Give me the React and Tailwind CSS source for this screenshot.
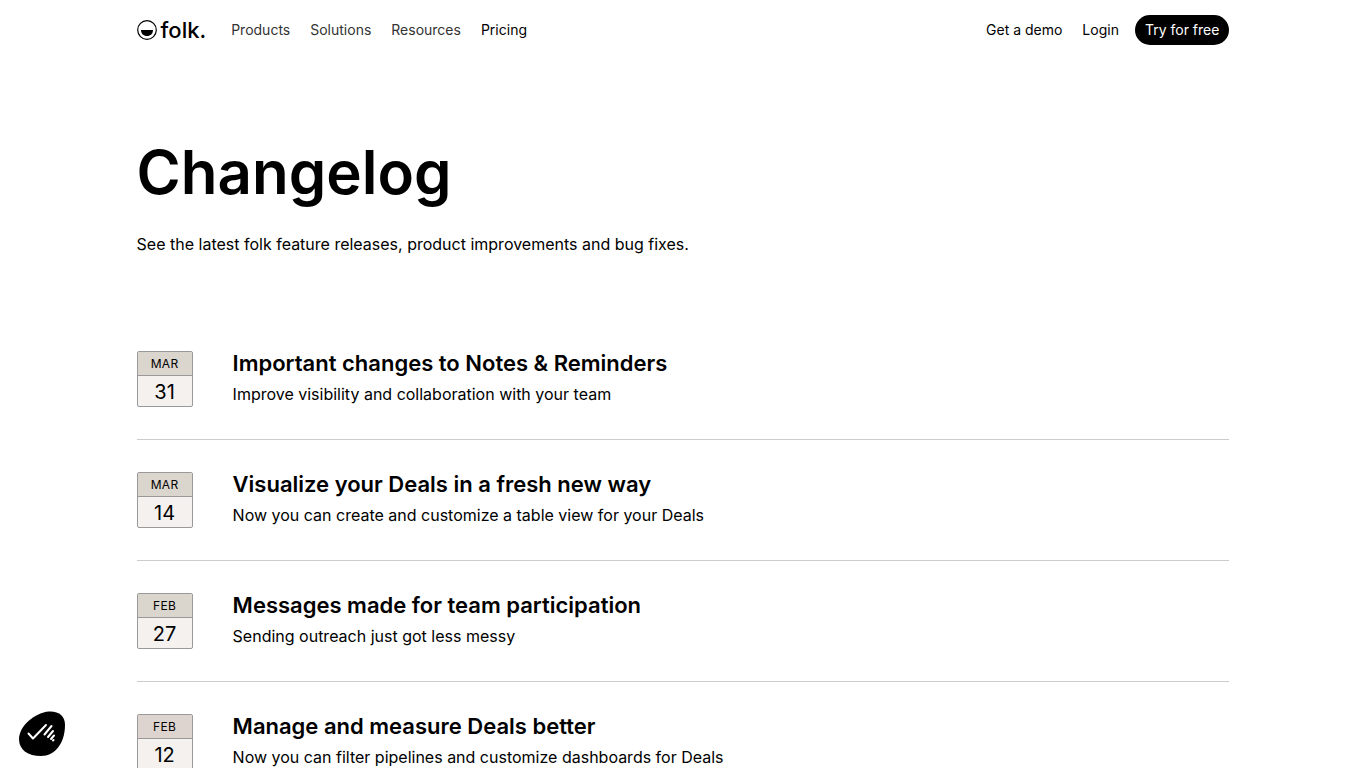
import React from 'react';

const navLinks = [
  { label: 'Products', muted: true },
  { label: 'Solutions', muted: true },
  { label: 'Resources', muted: true },
  { label: 'Pricing', muted: false },
];

const releases = [
  {
    month: 'MAR',
    day: '31',
    title: 'Important changes to Notes & Reminders',
    text: 'Improve visibility and collaboration with your team',
    tint: 'bg-[#dad5cd]',
  },
  {
    month: 'MAR',
    day: '14',
    title: 'Visualize your Deals in a fresh new way',
    text: 'Now you can create and customize a table view for your Deals',
    tint: 'bg-[#dad5cd]',
  },
  {
    month: 'FEB',
    day: '27',
    title: 'Messages made for team participation',
    text: 'Sending outreach just got less messy',
    tint: 'bg-[#dad5cd]',
  },
  {
    month: 'FEB',
    day: '12',
    title: 'Manage and measure Deals better',
    text: 'Now you can filter pipelines and customize dashboards for Deals',
    tint: 'bg-[#ddd4cf]',
  },
];

const Logo = () => (
  <a href="#" className="flex items-center gap-1">
    <svg className="h-5 w-5" viewBox="0 0 20 20" fill="none">
      <circle cx="10" cy="10" r="9.3" stroke="#000" strokeWidth="1.2" />
      <path d="M4 10h12c0 3.8-2.5 6-6 6s-6-2.200-6-6z" fill="#000" />
    </svg>
    <span className="text-[22px] leading-6 font-medium">folk.</span>
  </a>
);

const Header = () => (
  <header className="mx-auto flex h-15 w-4/5 items-center justify-between text-sm">
    <div className="flex items-center gap-[25px]">
      <Logo />
      <nav className="flex items-center gap-5">
        {navLinks.map((link) => (
          <a key={link.label} href="#" className={link.muted ? 'text-[#333]' : 'text-black'}>
            {link.label}
          </a>
        ))}
      </nav>
    </div>
    <div className="flex items-center">
      <a href="#" className="mr-5">Get a demo</a>
      <a href="#" className="mr-4">Login</a>
      <a href="#" className="rounded-full bg-black px-2.5 py-1 leading-[22px] text-white">
        Try for free
      </a>
    </div>
  </header>
);

const DateTile = ({ month, day, tint }) => (
  <div className="h-14 w-14 shrink-0 overflow-hidden rounded-xs border border-[#999] bg-[#f4f1ee] text-center">
    <div className={`h-6 border-b border-[#999] text-xs leading-6 tracking-wide ${tint}`}>{month}</div>
    <div className="text-xl leading-8">{day}</div>
  </div>
);

const Release = ({ month, day, title, text, tint }) => (
  <li className="border-b border-[#ccc]">
    <a href="#" className="flex gap-10 py-8">
      <DateTile month={month} day={day} tint={tint} />
      <div className="flex flex-col gap-[7px]">
        <h2 className="text-[22px] leading-6 font-semibold">{title}</h2>
        <p className="leading-6">{text}</p>
      </div>
    </a>
  </li>
);

// Cookie consent trigger pinned to the bottom left corner
const ConsentButton = () => (
  <button type="button" aria-label="Cookie preferences" className="fixed bottom-2.5 left-4.5 h-12 w-12">
    <svg viewBox="0 0 48 48" fill="none">
      <path d="M31 1.500C41 1 47 6 47 15C47 33 37 46 23 46C10 46 1 40 1 29C1 16 17 2.500 31 1.500Z" fill="#000" />
      <g stroke="#fff" strokeWidth="2" strokeLinecap="round">
        <path d="M10.500 23.500l4.500 5L28 15" strokeLinejoin="round" />
        <path d="M33.500 16l-7 8.500M35 21l-5 6M36 25.500l-3 3.500M35.500 30l-.5.500" />
      </g>
    </svg>
  </button>
);

const App = () => (
  <div className="bg-white font-['Inter',sans-serif] text-black">
    <Header />
    <main className="mx-auto w-4/5 pt-20">
      <h1 className="text-6xl leading-[64px] font-semibold">Changelog</h1>
      <p className="mt-7 leading-6">
        See the latest folk feature releases, product improvements and bug fixes.
      </p>
      <ul className="mt-[63px]">
        {releases.map((release) => (
          <Release key={release.title} {...release} />
        ))}
      </ul>
    </main>
    <ConsentButton />
  </div>
);

export default App;
